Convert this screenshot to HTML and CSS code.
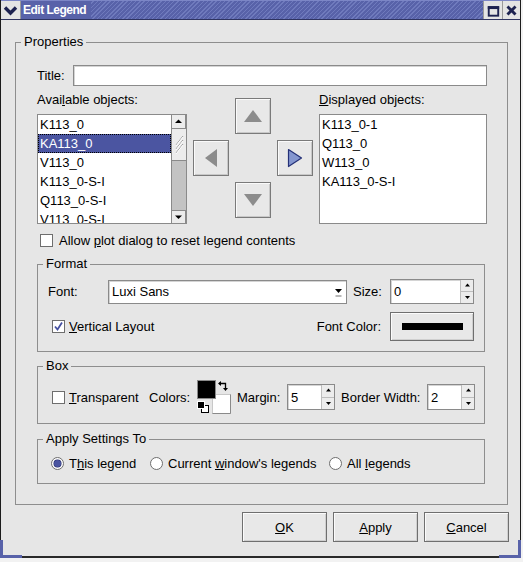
FILE: index.html
```html
<!DOCTYPE html>
<html>
<head>
<meta charset="utf-8">
<title>Edit Legend</title>
<link rel="stylesheet" href="styles.css">
</head>
<body>
<div class="window">
  <div class="titlebar">
    <div class="tb-btn tb-menu">
      <svg width="19" height="18" viewBox="0 0 19 18"><path d="M4 6.5 L9.5 12 L15 6.5" fill="none" stroke="#1d2250" stroke-width="3.4"/></svg>
    </div>
    <div class="tb-title">Edit Legend</div>
    <div class="tb-fill"></div>
    <div class="tb-btn tb-max">
      <svg width="19" height="18" viewBox="0 0 19 18"><rect x="5" y="6" width="10" height="9" fill="none" stroke="#1d2250" stroke-width="2"/><rect x="4" y="5" width="12" height="3" fill="#1d2250"/></svg>
    </div>
    <div class="tb-btn tb-close">
      <svg width="19" height="18" viewBox="0 0 19 18"><path d="M5 5 L14 14 M14 5 L5 14" stroke="#1d2250" stroke-width="3.2"/></svg>
    </div>
  </div>

  <div class="client">
    <fieldset class="group props">
      <legend>Properties</legend>
      <div class="props-body">
        <div class="title-row">
          <span class="title-lbl">Title:</span>
          <div class="entry title-entry"></div>
        </div>

        <div class="lists">
          <div class="list-col">
            <div class="list-lbl">Avai<u>l</u>able objects:</div>
            <div class="listbox avail">
              <div class="items">
                <div class="item">K113_0</div>
                <div class="item sel">KA113_0</div>
                <div class="item">V113_0</div>
                <div class="item">K113_0-S-I</div>
                <div class="item">Q113_0-S-I</div>
                <div class="item">V113_0-S-I</div>
              </div>
              <div class="vscroll">
                <div class="sb-btn"><svg width="13" height="13" viewBox="0 0 13 13"><path d="M3 8 L6.5 4.5 L10 8 Z" fill="#000"/></svg></div>
                <div class="sb-thumb"><svg width="13" height="30" viewBox="0 0 13 30"><path d="M3 15 L10 6 M3 19 L10 10 M3 23 L10 14" stroke="#9a9a9a" stroke-width="1"/><path d="M3 16 L10 7 M3 20 L10 11 M3 24 L10 15" stroke="#ffffff" stroke-width="1"/></svg></div>
                <div class="sb-trough"></div>
                <div class="sb-btn"><svg width="13" height="12" viewBox="0 0 13 12"><path d="M3 4.5 L6.5 8 L10 4.5 Z" fill="#000"/></svg></div>
              </div>
            </div>
          </div>

          <div class="arrows">
            <div class="abtn a-up"><svg width="20" height="14" viewBox="0 0 20 14"><path d="M1 13 L10 1 L19 13 Z" fill="#8c8c8c"/></svg></div>
            <div class="abtn a-left"><svg width="14" height="20" viewBox="0 0 14 20"><path d="M13 1 L1 10 L13 19 Z" fill="#8c8c8c"/></svg></div>
            <div class="abtn a-right"><svg width="16" height="20" viewBox="0 0 16 20"><path d="M1.5 1.5 L14.5 10 L1.5 18.5 Z" fill="#8496cf" stroke="#243077" stroke-width="1.2" stroke-linejoin="round"/></svg></div>
            <div class="abtn a-down"><svg width="20" height="14" viewBox="0 0 20 14"><path d="M1 1 L19 1 L10 13 Z" fill="#8c8c8c"/></svg></div>
          </div>

          <div class="list-col">
            <div class="list-lbl"><u>D</u>isplayed objects:</div>
            <div class="listbox disp">
              <div class="items">
                <div class="item">K113_0-1</div>
                <div class="item">Q113_0</div>
                <div class="item">W113_0</div>
                <div class="item">KA113_0-S-I</div>
              </div>
            </div>
          </div>
        </div>

        <div class="check-row allow-row">
          <span class="cb"></span>
          <span>Allow <u>p</u>lot dialog to reset legend contents</span>
        </div>

        <fieldset class="group sub format">
          <legend>Format</legend>
          <div class="format-body">
            <div class="font-row">
              <span>Font:</span>
              <div class="entry combo">
                <span class="combo-text">Luxi Sans</span>
                <span class="combo-arrow"><svg width="9" height="12" viewBox="0 0 9 12"><path d="M1 3 L4.5 7 L8 3 Z" fill="#000"/><rect x="1.5" y="9" width="6" height="2" fill="#b8b8b8"/></svg></span>
              </div>
              <span class="size-lbl">Size:</span>
              <div class="entry spin">
                <span class="spin-text">0</span>
                <div class="spin-btns">
                  <div class="spin-btn"><svg width="11" height="11" viewBox="0 0 11 11"><path d="M3 6.5 L5.5 3.5 L8 6.5 Z" fill="#000"/></svg></div>
                  <div class="spin-btn"><svg width="11" height="11" viewBox="0 0 11 11"><path d="M3 4 L5.5 7 L8 4 Z" fill="#000"/></svg></div>
                </div>
              </div>
            </div>
            <div class="layout-row">
              <div class="check-row">
                <span class="cb checked"><svg width="11" height="11" viewBox="0 0 11 11"><path d="M2 5.5 L4.5 8.5 L9 1.5" fill="none" stroke="#4550a0" stroke-width="1.8"/></svg></span>
                <span><u>V</u>ertical Layout</span>
              </div>
              <span class="fc-lbl">Font Color:</span>
              <div class="btn color-btn"><span class="color-bar"></span></div>
            </div>
          </div>
        </fieldset>

        <fieldset class="group sub box">
          <legend>Box</legend>
          <div class="box-row">
            <span class="cb"></span>
            <span class="transp"><u>T</u>ransparent</span>
            <span>Colors:</span>
            <svg class="swatch" width="34" height="34" viewBox="0 0 34 34">
              <rect x="15.5" y="14.5" width="18" height="19" fill="#ffffff" stroke="#c8c8c8"/>
              <path d="M33.5 14.5 V33.5 H15.5" fill="none" stroke="#8a8a8a"/>
              <rect x="0.5" y="0.5" width="18" height="18" fill="#000" stroke="#8a8a8a"/>
              <rect x="4.5" y="25.5" width="7" height="7" fill="#fff" stroke="#000"/>
              <rect x="0.5" y="21.5" width="7" height="7" fill="#000" stroke="#fff"/>
              <path d="M22 3.5 H28.5 V9" fill="none" stroke="#000" stroke-width="1.3"/>
              <path d="M21 3.5 L24 1 L24 6 Z" fill="#000"/>
              <path d="M28.5 11 L26 8 L31 8 Z" fill="#000"/>
            </svg>
            <span class="lbl-pad">Margin:</span>
            <div class="entry spin small">
              <span class="spin-text">5</span>
              <div class="spin-btns">
                <div class="spin-btn"><svg width="11" height="11" viewBox="0 0 11 11"><path d="M3 6.5 L5.5 3.5 L8 6.5 Z" fill="#000"/></svg></div>
                <div class="spin-btn"><svg width="11" height="11" viewBox="0 0 11 11"><path d="M3 4 L5.5 7 L8 4 Z" fill="#000"/></svg></div>
              </div>
            </div>
            <span class="lbl-pad">Border Width:</span>
            <div class="entry spin small">
              <span class="spin-text">2</span>
              <div class="spin-btns">
                <div class="spin-btn"><svg width="11" height="11" viewBox="0 0 11 11"><path d="M3 6.5 L5.5 3.5 L8 6.5 Z" fill="#000"/></svg></div>
                <div class="spin-btn"><svg width="11" height="11" viewBox="0 0 11 11"><path d="M3 4 L5.5 7 L8 4 Z" fill="#000"/></svg></div>
              </div>
            </div>
          </div>
        </fieldset>

        <fieldset class="group sub apply">
          <legend>Apply Settings To</legend>
          <div class="radio-row">
            <div class="radio-item"><span class="rb on"></span><span>T<u>h</u>is legend</span></div>
            <div class="radio-item"><span class="rb"></span><span>Current <u>w</u>indow's legends</span></div>
            <div class="radio-item"><span class="rb"></span><span>All <u>l</u>egends</span></div>
          </div>
        </fieldset>
      </div>
    </fieldset>

    <div class="buttons">
      <div class="btn dlg-btn"><span><u>O</u>K</span></div>
      <div class="btn dlg-btn"><span><u>A</u>pply</span></div>
      <div class="btn dlg-btn"><span><u>C</u>ancel</span></div>
    </div>
  </div>

  <div class="corner corner-bl"></div>
  <div class="corner corner-br"></div>
</div>
</body>
</html>
```

FILE: styles.css
```css
* { box-sizing: border-box; }
html, body { margin: 0; padding: 0; }
body {
  width: 523px;
  height: 562px;
  overflow: hidden;
  background: #f2f2f2;
  font-family: "Liberation Sans", Arial, sans-serif;
  font-size: 13px;
  color: #000;
}
u { text-decoration: underline; text-underline-offset: 1px; }

.window {
  position: relative;
  width: 521px;
  height: 558px;
  background: #e6e6e6;
  border-left: 1px solid #1c1c1c;
  border-right: 1px solid #1c1c1c;
  border-bottom: 2px solid #2a2a2a;
  display: flex;
  flex-direction: column;
}

/* title bar */
.titlebar {
  height: 20px;
  display: flex;
  background: repeating-linear-gradient(135deg, #5862a9 0 2px, #6f7abd 2px 3px);
  border-top: 1px solid #7c86c6;
  border-bottom: 1px solid #2f3461;
}
.tb-btn {
  width: 19px;
  background: #e4e4e4;
  display: flex;
  align-items: center;
  justify-content: center;
  border-left: 1px solid #9a9a9a;
}
.tb-menu { border-left: 0; border-right: 1px solid #9a9a9a; width: 20px; }
.tb-close { width: 18px; }
.tb-title {
  background: #5862a9;
  color: #fff;
  font-weight: bold;
  font-size: 12px;
  letter-spacing: -0.5px;
  line-height: 18px;
  padding: 0 5px 0 2px;
}
.tb-fill { flex: 1; }

/* client */
.client {
  flex: 1;
  padding: 15px 11px 0 14px;
  display: flex;
  flex-direction: column;
}

.group {
  margin: 0;
  padding: 0;
  border: 1px solid #8e8e8e;
  min-width: 0;
}
.group > legend {
  margin-left: 5px;
  padding: 0 3px;
  line-height: 14px;
  font-size: 13px;
}
.props { width: 493px; }
.props-body { padding: 16px 20px 20px 21px; }

.entry {
  background: #fff;
  border: 1px solid #8a8a8a;
  box-shadow: inset 1px 1px 0 #d4d4d4;
}

.title-row {
  display: flex;
  align-items: center;
  height: 21px;
}
.title-lbl { width: 36px; }
.title-entry { flex: 1; height: 21px; }

/* lists */
.lists {
  margin-top: 7px;
  display: grid;
  grid-template-columns: 150px 120px 168px;
  column-gap: 6px;
}
.list-lbl { line-height: 14px; height: 14px; margin-bottom: 7px; white-space: nowrap; }
.listbox {
  height: 110px;
  background: #fff;
  border: 1px solid #8a8a8a;
  display: flex;
  overflow: hidden;
}
.items { flex: 1; overflow: hidden; }
.item {
  height: 19px;
  line-height: 19px;
  padding-left: 2px;
  white-space: nowrap;
}
.item.sel {
  background: #4b55a1;
  color: #fff;
  outline: 1px dotted #000;
  outline-offset: -1px;
}
.vscroll {
  width: 15px;
  background: #c3c3c3;
  display: flex;
  flex-direction: column;
  border-left: 1px solid #8a8a8a;
}
.sb-btn {
  height: 14px;
  background: #ececec;
  border: 1px solid #8a8a8a;
  border-left: 0;
  display: flex;
  align-items: center;
  justify-content: center;
}
.sb-btn:first-child { border-top: 0; }
.sb-btn:last-child { border-bottom: 0; height: 13px; }
.sb-thumb {
  height: 32px;
  background: #ececec;
  border-bottom: 1px solid #8a8a8a;
  display: flex;
  align-items: center;
  justify-content: center;
}
.sb-trough { flex: 1; }

/* arrow buttons */
.arrows {
  margin-top: 5px;
  display: grid;
  grid-template-columns: 36px 36px 36px;
  grid-template-rows: 36px 36px 36px;
  gap: 6px;
}
.abtn {
  background: #e8e8e8;
  border: 1px solid #7a7a7a;
  box-shadow: inset 1px 1px 0 #fafafa, inset -1px -1px 0 #c8c8c8;
  display: flex;
  align-items: center;
  justify-content: center;
}
.a-up { grid-column: 2; grid-row: 1; }
.a-left { grid-column: 1; grid-row: 2; }
.a-right { grid-column: 3; grid-row: 2; }
.a-down { grid-column: 2; grid-row: 3; }

/* checkboxes */
.check-row { display: flex; align-items: center; white-space: nowrap; }
.allow-row { margin-top: 10px; height: 13px; padding-left: 3px; }
.allow-row .cb { margin-right: 6px; }
.cb {
  width: 13px;
  height: 13px;
  background: #fff;
  border: 1px solid #6e6e6e;
  display: inline-flex;
  align-items: center;
  justify-content: center;
  margin-right: 4px;
  flex: none;
}

/* sub groups */
.sub { width: 448px; }
.format { margin-top: 10px; }
.format-body { padding: 8px 10px 10px 10px; }
.font-row {
  display: grid;
  grid-template-columns: 60px 239px 43px 84px;
  align-items: center;
  height: 25px;
}
.combo {
  height: 24px;
  display: flex;
  align-items: center;
}
.combo-text { flex: 1; padding-left: 3px; }
.combo-arrow {
  width: 16px;
  display: flex;
  justify-content: center;
}
.size-lbl { padding-left: 6px; }
.spin {
  height: 25px;
  display: flex;
  align-items: center;
}
.spin-text { flex: 1; padding-left: 3px; }
.spin-btns {
  width: 13px;
  align-self: stretch;
  display: flex;
  flex-direction: column;
  border-left: 1px solid #bdbdbd;
}
.spin-btn {
  flex: 1;
  background: #ececec;
  display: flex;
  align-items: center;
  justify-content: center;
  border-bottom: 1px solid #bdbdbd;
}
.spin-btn:last-child { border-bottom: 0; }

.layout-row {
  margin-top: 8px;
  height: 29px;
  display: grid;
  grid-template-columns: 1fr auto 84px;
  align-items: center;
}
.layout-row .check-row { padding-left: 4px; }
.fc-lbl { padding-right: 9px; }

.btn {
  background: #e8e8e8;
  border: 1px solid #6f6f6f;
  box-shadow: inset 1px 1px 0 #fbfbfb, inset -1px -1px 0 #cfcfcf;
  display: flex;
  align-items: center;
  justify-content: center;
}
.color-btn { height: 29px; }
.color-bar { width: 61px; height: 7px; background: #000; }

.box { margin-top: 7px; }
.box-row {
  padding: 7px 0 9px 14px;
  display: grid;
  grid-template-columns: 17px 80px 48px 34px 56px 48px 92px 48px;
  align-items: center;
  height: 50px;
  white-space: nowrap;
}
.box-row .cb { margin-right: 0; }
.swatch { display: block; }
.lbl-pad { padding-left: 6px; }
.spin.small { height: 26px; }

.apply { margin-top: 8px; }
.radio-row {
  padding: 10px 0 13px 13px;
  display: grid;
  grid-template-columns: 99px 179px auto;
  align-items: center;
  white-space: nowrap;
}
.radio-item { display: flex; align-items: center; height: 14px; }
.rb {
  width: 13px;
  height: 13px;
  border-radius: 50%;
  background: #fff;
  border: 1px solid #6e6e6e;
  margin-right: 5px;
  flex: none;
  display: inline-flex;
  align-items: center;
  justify-content: center;
}
.rb.on::after {
  content: "";
  width: 7px;
  height: 7px;
  border-radius: 50%;
  background: #4b55a1;
  box-shadow: 0 0 0 0.5px #232a66;
}

/* dialog buttons */
.buttons {
  margin-top: 7px;
  display: flex;
  justify-content: flex-end;
  gap: 6px;
  width: 494px;
}
.dlg-btn { width: 85px; height: 30px; }

/* frame corners */
.corner {
  position: absolute;
  bottom: -2px;
  width: 22px;
  height: 18px;
  border-bottom: 3px solid #5862a9;
}
.corner-bl { left: -1px; border-left: 3px solid #5862a9; }
.corner-br { right: -1px; border-right: 3px solid #5862a9; }
```
